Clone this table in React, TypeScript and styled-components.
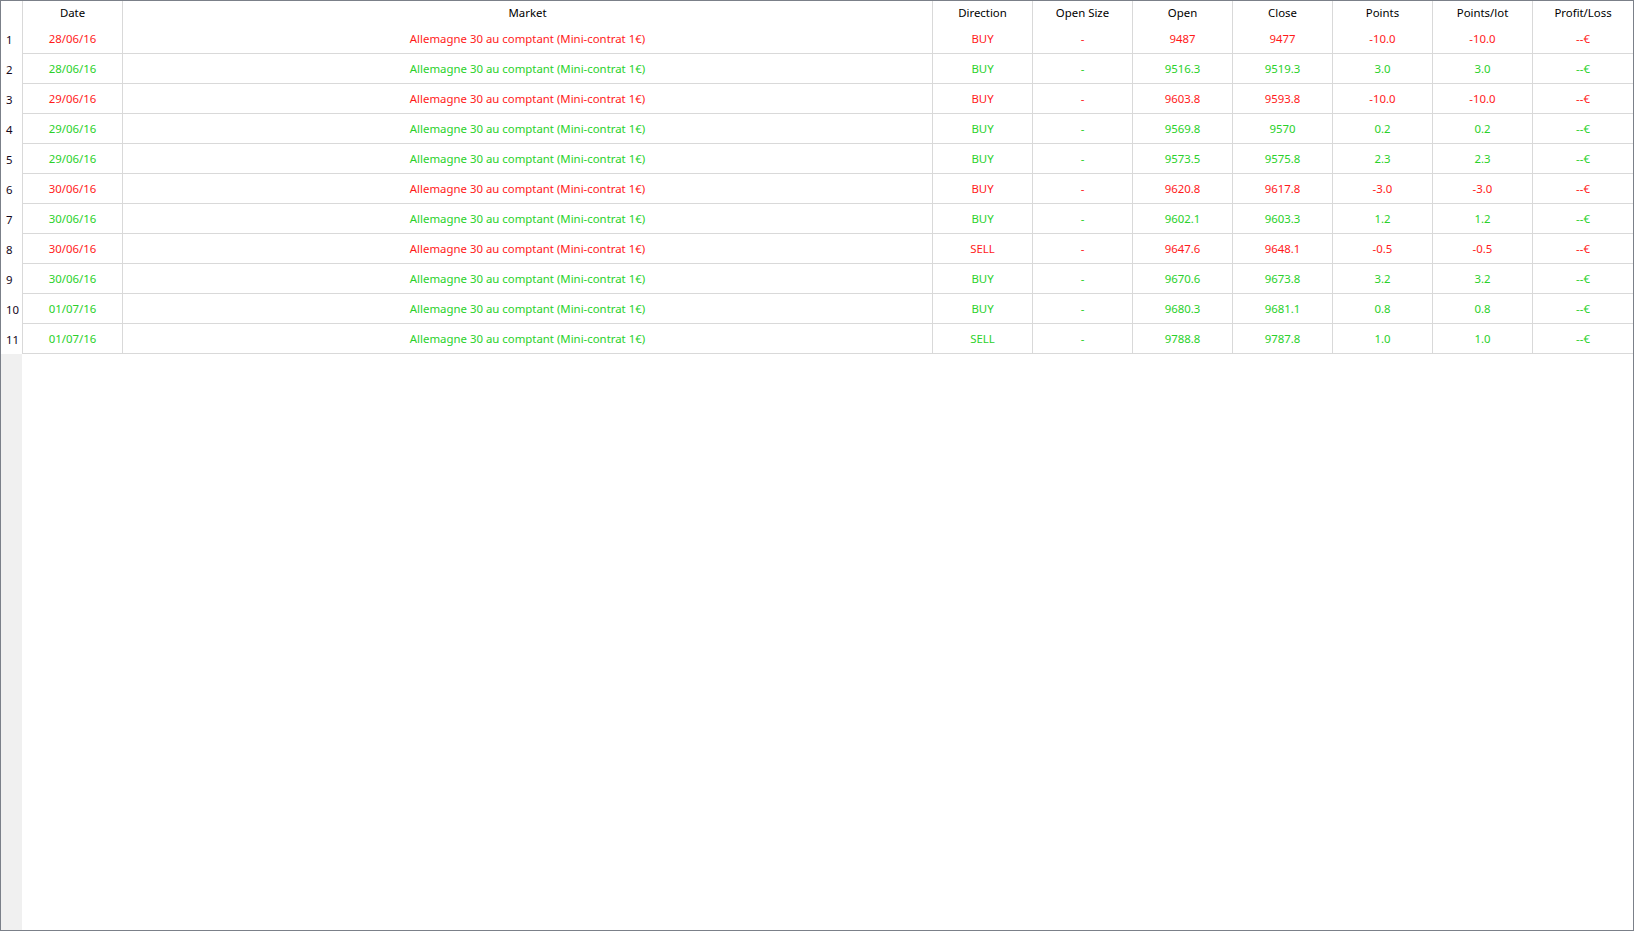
import React from "react";
import styled, { createGlobalStyle } from "styled-components";

const GlobalStyle = createGlobalStyle`
  html, body { margin: 0; padding: 0; background: #ffffff; overflow: hidden; }
  body { font-family: "Noto Sans", "Open Sans", sans-serif; font-size: 11.4px; }
  * { box-sizing: border-box; }
`;

const COLS = "21px 100px 810px repeat(6, 100px) 1fr";

const Frame = styled.div`
  width: 1634px;
  height: 931px;
  border: 1px solid #7b8089;
  display: flex;
  flex-direction: column;
  background: #ffffff;
  overflow: hidden;
`;

const HeaderRow = styled.div`
  display: grid;
  grid-template-columns: ${COLS};
  height: 23px;
  flex: none;
`;

const HeaderCell = styled.div<{ $first?: boolean }>`
  display: flex;
  align-items: center;
  justify-content: center;
  border-left: ${(p) => (p.$first ? "none" : "1px solid #d9d9d9")};
  color: #000000;
  font-size: 11.4px;
  white-space: nowrap;
`;

const DataRow = styled.div`
  display: grid;
  grid-template-columns: ${COLS};
  height: 30px;
  flex: none;
`;

const RowHead = styled.div`
  display: flex;
  align-items: center;
  padding-left: 5px;
  color: #14061a;
  font-size: 11.4px;
  background: #ffffff;
`;

const Cell = styled.div<{ $color: string }>`
  display: flex;
  align-items: center;
  justify-content: center;
  border-left: 1px solid #d9d9d9;
  border-bottom: 1px solid #d9d9d9;
  color: ${(p) => p.$color};
  font-size: 11.4px;
  white-space: nowrap;
`;

const Filler = styled.div`
  flex: 1;
  display: flex;
  min-height: 0;
`;

const FillerHead = styled.div`
  width: 21px;
  background: #f0f0f0;
`;

const FillerBody = styled.div`
  flex: 1;
  background: #ffffff;
`;

const RED = "#ff1a1a";
const GREEN = "#2ad12a";

type Trade = {
  date: string;
  win: boolean;
  dir: string;
  open: string;
  close: string;
  pts: string;
};

const trades: Trade[] = [
  { date: "28/06/16", win: false, dir: "BUY", open: "9487", close: "9477", pts: "-10.0" },
  { date: "28/06/16", win: true, dir: "BUY", open: "9516.3", close: "9519.3", pts: "3.0" },
  { date: "29/06/16", win: false, dir: "BUY", open: "9603.8", close: "9593.8", pts: "-10.0" },
  { date: "29/06/16", win: true, dir: "BUY", open: "9569.8", close: "9570", pts: "0.2" },
  { date: "29/06/16", win: true, dir: "BUY", open: "9573.5", close: "9575.8", pts: "2.3" },
  { date: "30/06/16", win: false, dir: "BUY", open: "9620.8", close: "9617.8", pts: "-3.0" },
  { date: "30/06/16", win: true, dir: "BUY", open: "9602.1", close: "9603.3", pts: "1.2" },
  { date: "30/06/16", win: false, dir: "SELL", open: "9647.6", close: "9648.1", pts: "-0.5" },
  { date: "30/06/16", win: true, dir: "BUY", open: "9670.6", close: "9673.8", pts: "3.2" },
  { date: "01/07/16", win: true, dir: "BUY", open: "9680.3", close: "9681.1", pts: "0.8" },
  { date: "01/07/16", win: true, dir: "SELL", open: "9788.8", close: "9787.8", pts: "1.0" },
];

const headers = [
  "Date",
  "Market",
  "Direction",
  "Open Size",
  "Open",
  "Close",
  "Points",
  "Points/lot",
  "Profit/Loss",
];

export default function App() {
  return (
    <>
      <GlobalStyle />
      <Frame>
        <HeaderRow>
          <HeaderCell $first />
          {headers.map((h) => (
            <HeaderCell key={h}>{h}</HeaderCell>
          ))}
        </HeaderRow>
        {trades.map((t, i) => {
          const c = t.win ? GREEN : RED;
          return (
            <DataRow key={i}>
              <RowHead>{i + 1}</RowHead>
              <Cell $color={c}>{t.date}</Cell>
              <Cell $color={c}>Allemagne 30 au comptant (Mini-contrat 1€)</Cell>
              <Cell $color={c}>{t.dir}</Cell>
              <Cell $color={c}>-</Cell>
              <Cell $color={c}>{t.open}</Cell>
              <Cell $color={c}>{t.close}</Cell>
              <Cell $color={c}>{t.pts}</Cell>
              <Cell $color={c}>{t.pts}</Cell>
              <Cell $color={c}>--€</Cell>
            </DataRow>
          );
        })}
        <Filler>
          <FillerHead />
          <FillerBody />
        </Filler>
      </Frame>
    </>
  );
}
